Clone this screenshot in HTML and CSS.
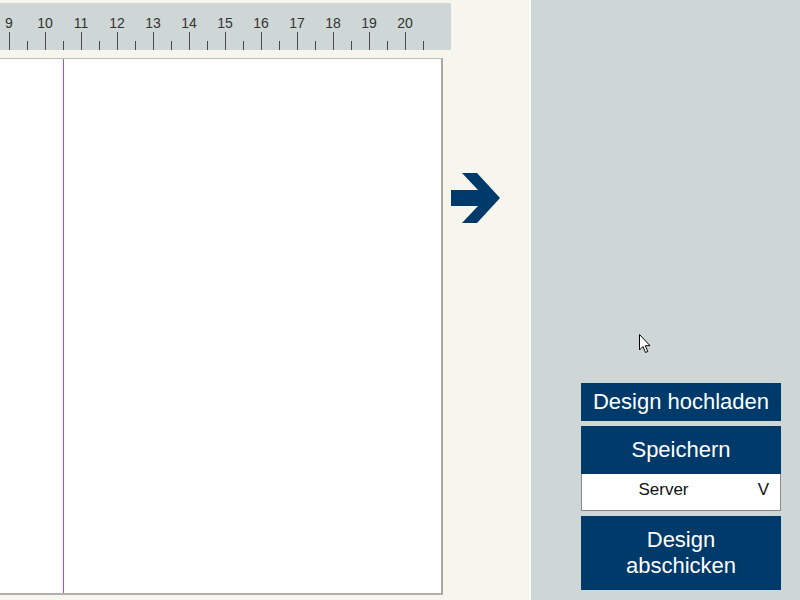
FILE: index.html
```html
<!DOCTYPE html>
<html lang="de">
<head>
<meta charset="utf-8">
<title>Designer</title>
<link rel="stylesheet" href="styles.css">
</head>
<body>
<div class="app">
  <div class="workspace">
    <div class="ruler">
      <div class="nums">
        <span>9</span><span>10</span><span>11</span><span>12</span><span>13</span><span>14</span><span>15</span><span>16</span><span>17</span><span>18</span><span>19</span><span>20</span>
      </div>
    </div>
    <div class="stage">
      <div class="canvas">
        <div class="guide"></div>
      </div>
      <svg class="arrow" width="50" height="52" viewBox="451 173 50 52" aria-hidden="true">
        <polygon points="451,191 478,191 462,174 477,174 500,199 477,224 462,224 478,207 451,207" fill="#003a6b"/>
      </svg>
    </div>
  </div>
  <div class="panel">
    <button class="btn btn-upload">Design hochladen</button>
    <button class="btn btn-save">Speichern</button>
    <div class="select"><span class="sel-text">Server</span><span class="sel-arrow">V</span></div>
    <button class="btn btn-send">Design<br>abschicken</button>
  </div>
  <svg class="cursor" width="13" height="20" viewBox="0 0 13 20" aria-hidden="true">
    <path d="M0.5 0.5 L0.5 16 L4 12.5 L6.5 18.5 L8.8 17.5 L6.3 11.7 L11 11.7 Z" fill="#fff" stroke="#000" stroke-width="1" stroke-linejoin="miter"/>
  </svg>
</div>
</body>
</html>
```
FILE: styles.css
```css
html, body {
  margin: 0;
  padding: 0;
  width: 800px;
  height: 600px;
  overflow: hidden;
  font-family: "Liberation Sans", Arial, sans-serif;
}

.app {
  position: relative;
  display: flex;
  width: 800px;
  height: 600px;
}

.workspace {
  width: 529px;
  background: #f6f5ee;
  border-right: 2px solid #fbfbf7;
  display: flex;
  flex-direction: column;
}

.ruler {
  margin-top: 3px;
  width: 451px;
  height: 47px;
  background-color: #cfd7d6;
  background-image:
    repeating-linear-gradient(to right, #4a4a4a 0 1px, transparent 1px 36px),
    repeating-linear-gradient(to right, #4a4a4a 0 1px, transparent 1px 36px);
  background-size: 420px 18px, 400px 9px;
  background-position: 9px 100%, 27px 100%;
  background-repeat: no-repeat;
  overflow: hidden;
}

.nums {
  display: flex;
  margin-left: -9px;
  padding-top: 12px;
}

.nums span {
  flex: 0 0 36px;
  text-align: center;
  font-size: 14px;
  line-height: 16px;
  color: #333;
}

.stage {
  display: flex;
  align-items: flex-start;
  margin-top: 8px;
}

.canvas {
  width: 441px;
  height: 534px;
  background: #fff;
  border-top: 1px solid #b8c0b6;
  border-right: 2px solid #a9a9a2;
  border-bottom: 2px solid #b1b1aa;
  display: flex;
}

.guide {
  margin-left: 63px;
  width: 1px;
  background: #e2439a;
}

.arrow {
  display: block;
  margin-left: 8px;
  margin-top: 114px;
}

.panel {
  flex: 1;
  background: #ced6d6;
  display: flex;
  flex-direction: column;
  justify-content: flex-end;
  padding: 0 19px 10px 50px;
}

.btn {
  display: block;
  width: 200px;
  border: 0;
  margin: 0;
  background: #003a6b;
  color: #fff;
  font-family: "Liberation Sans", Arial, sans-serif;
  font-size: 22px;
  text-align: center;
  padding: 0;
}

.btn-upload {
  height: 38px;
  line-height: 38px;
}

.btn-save {
  margin-top: 5px;
  height: 48px;
  line-height: 48px;
}

.select {
  width: 198px;
  height: 35px;
  border: 1px solid #8a8a8a;
  border-top: 0;
  background: #fff;
  display: flex;
  align-items: center;
  font-size: 17px;
  color: #111;
  padding-bottom: 1px;
}

.sel-text {
  flex: 1;
  text-align: center;
  padding-bottom: 3px;
}

.sel-arrow {
  width: 24px;
  padding-right: 11px;
  text-align: right;
  padding-bottom: 3px;
}

.btn-send {
  margin-top: 5px;
  height: 74px;
  line-height: 26px;
  padding-bottom: 1px;
}

.cursor {
  position: absolute;
  left: 639px;
  top: 334px;
}
```
